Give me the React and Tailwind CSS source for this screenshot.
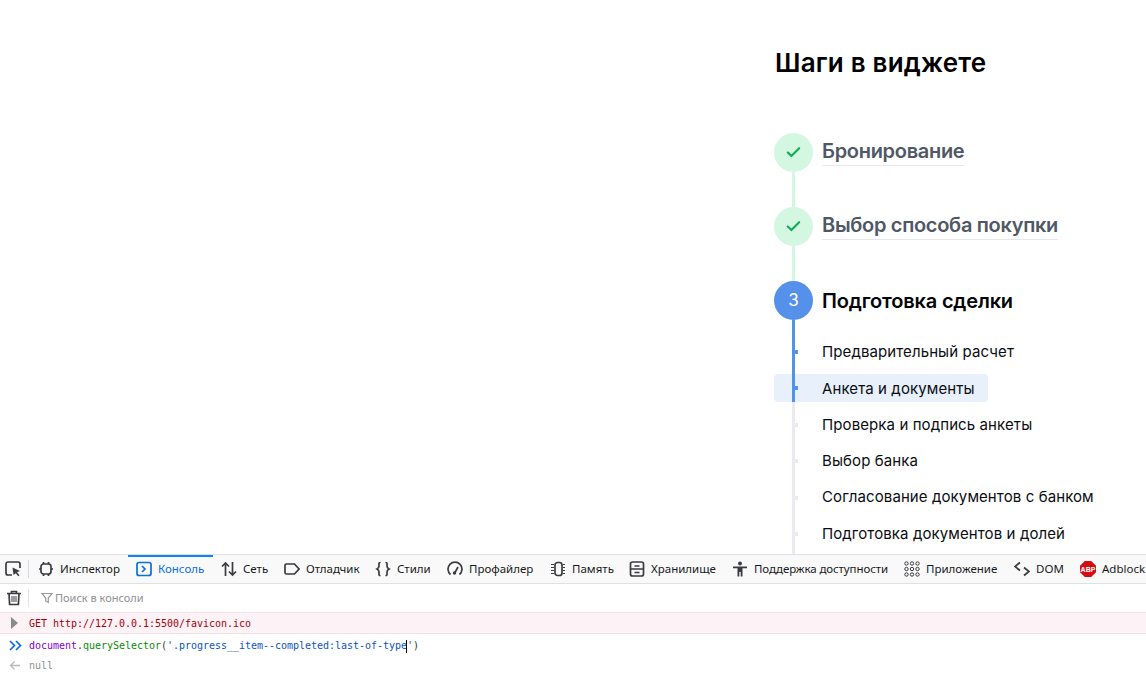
import { Check } from 'lucide-react';

const substeps = [
  { label: 'Предварительный расчет', done: true },
  { label: 'Анкета и документы', done: true, current: true },
  { label: 'Проверка и подпись анкеты' },
  { label: 'Выбор банка' },
  { label: 'Согласование документов с банком' },
  { label: 'Подготовка документов и долей' },
];

const IconBase = ({ children, className = 'text-[#3b3b40]' }) => (
  <svg width="16" height="16" viewBox="0 0 16 16" fill="none" stroke="currentColor" strokeWidth="1.7" className={`shrink-0 ${className}`}>
    {children}
  </svg>
);

const tabs = [
  {
    label: 'Инспектор', width: 'w-[60px]',
    icon: <IconBase><rect x="3" y="3" width="10" height="10" rx="2.5" /><path d="M5.5 1v2M10.5 1v2M5.5 13v2M10.5 13v2M1 8h2M13 8h2" /></IconBase>,
  },
  {
    label: 'Консоль', width: 'w-[47px]', active: true,
    icon: <IconBase className="text-[#0a6fe0]"><rect x="1" y="1.500" width="14" height="13" rx="2" /><path d="M6 5 9 8l-3 3" /></IconBase>,
  },
  {
    label: 'Сеть', width: 'w-[25px]',
    icon: <IconBase><path d="M4.500 15V2M1 5.500 4.500 2 8 5.500M11.500 1v13M8 10.500l3.500 3.500 3.500-3.500" /></IconBase>,
  },
  {
    label: 'Отладчик', width: 'w-[53px]',
    icon: <IconBase><path d="M2.500 3h8L15 8l-4.500 5h-8A1.500 1.500 0 0 1 1 11.500v-7A1.500 1.500 0 0 1 2.500 3Z" /></IconBase>,
  },
  {
    label: 'Стили', width: 'w-[34px]',
    icon: <IconBase><path d="M5.500 1.500C3.500 1.500 4 3 4 5c0 2-2 3-2 3s2 1 2 3c0 2-.5 3.500 1.500 3.500M10.500 1.500c2 0 1.500 1.500 1.500 3.500 0 2 2 3 2 3s-2 1-2 3c0 2 .5 3.500-1.500 3.500" /></IconBase>,
  },
  {
    label: 'Профайлер', width: 'w-[65px]',
    icon: <IconBase><path d="M3.500 13.500a7 7 0 1 1 9 0" /><circle cx="7.500" cy="12" r="1.700" fill="currentColor" stroke="none" /><path d="M8 11.500 11 6" /></IconBase>,
  },
  {
    label: 'Память', width: 'w-[41px]',
    icon: <IconBase><rect x="5" y="1.500" width="7" height="13" rx="2.500" /><path d="M1 3.500h3M1 6.500h3M1 9.500h3M1 12.500h3M13 3.500h2M13 6.500h2M13 9.500h2M13 12.500h2" strokeWidth="1" /></IconBase>,
  },
  {
    label: 'Хранилище', width: 'w-[65px]',
    icon: <IconBase><rect x="1.500" y="1" width="13" height="14" rx="2" /><path d="M5.500 5h5M1.500 8h13M5.500 11.500h5" /></IconBase>,
  },
  {
    label: 'Поддержка доступности', width: 'w-[134px] tracking-[-0.1px]',
    icon: (
      <svg width="16" height="16" viewBox="0 0 16 16" className="shrink-0 text-[#3b3b40]" fill="currentColor">
        <circle cx="8" cy="2.500" r="2" />
        <path d="M1 5.500h14v1.800H10.500V15.500H8.700V11H7.300v4.500H5.500V7.300H1Z" />
      </svg>
    ),
  },
  {
    label: 'Приложение', width: 'w-[72px]',
    icon: (
      <svg width="16" height="16" viewBox="0 0 16 16" className="shrink-0 text-[#3b3b40]" fill="none" stroke="currentColor" strokeWidth="1">
        {[2.500, 8, 13.500].flatMap((x) => [2.500, 8, 13.500].map((y) => <circle key={`${x}-${y}`} cx={x} cy={y} r="1.700" />))}
      </svg>
    ),
  },
  {
    label: 'DOM', width: 'w-[28px]',
    icon: <IconBase><path d="M6 1.500 1 5.500l5 4M10 6.500l5 4-5 4" strokeWidth="1.800" /></IconBase>,
  },
  {
    label: 'Adblock', width: 'w-[44px]',
    icon: (
      <svg width="16" height="16" viewBox="0 0 16 16" className="shrink-0">
        <path d="M4.800 0h6.400L16 4.800v6.400L11.200 16H4.800L0 11.200V4.800Z" fill="#d40d12" />
        <text x="8" y="10.800" textAnchor="middle" fontSize="7" fontWeight="700" fontFamily="Liberation Sans, sans-serif" fill="#fff">ABP</text>
      </svg>
    ),
  },
];

function Step({ status, number, label }) {
  const done = status === 'done';
  return (
    <div className="flex gap-[9px]">
      <div className={`w-[39px] flex flex-col items-center ${number ? '' : 'h-[74px]'}`}>
        <div className={`w-[39px] h-[39px] rounded-full flex items-center justify-center shrink-0 ${done ? 'bg-[#d4f7e2]' : 'bg-[#5591ea]'}`}>
          {done ? <Check size={17} strokeWidth={3} className="text-[#0fae55]" /> : <span className="text-white text-[17px] leading-none">{number}</span>}
        </div>
        {done && <div className="w-[3px] flex-1 bg-[#d4f7e2]" />}
      </div>
      <div className="h-[39px] flex items-center">
        <span className={`text-[20px] font-semibold leading-[26px] ${done ? 'tracking-[-0.3px] text-[#4f5864] border-b border-[#e5e7eb] pb-[1px] -mt-px' : 'tracking-[-0.18px] text-[#040507]'}`}>{label}</span>
      </div>
    </div>
  );
}

function Substep({ label, done, current, first }) {
  return (
    <div className={`relative ${first ? 'pt-[18px]' : 'pt-[8.4px]'}`}>
      <div className={`absolute left-[18px] top-0 bottom-0 w-[3px] z-10 ${done ? 'bg-[#5591ea]' : 'bg-[#e9ebf0]'}`} />
      <div className={`h-[28px] flex items-center pl-[48px] w-fit pr-[13px] rounded-[4px] relative ${current ? 'bg-[#e8f0fb]' : ''}`}>
        <div className={`absolute left-[21px] top-[12px] w-[3px] h-[4px] ${done ? 'bg-[#5591ea]' : 'bg-[#e9ebf0]'}`} />
        <span className={`text-[15px] tracking-[0.1px] text-[#0b0d12] whitespace-nowrap ${current ? 'mt-[1px]' : ''}`}>{label}</span>
      </div>
    </div>
  );
}

export default function App() {
  return (
    <div className="w-[1146px] h-[696px] overflow-hidden bg-white flex flex-col">
      <div className="h-[554px] overflow-hidden pl-[774px] font-['Inter',sans-serif] shrink-0">
        <h1 className="text-[26px] font-semibold tracking-[0.2px] leading-[32px] text-black pt-[47px] mb-[54px] pl-px">Шаги в виджете</h1>
        <Step status="done" label="Бронирование" />
        <Step status="done" label="Выбор способа покупки" />
        <Step status="current" number="3" label="Подготовка сделки" />
        {substeps.map((s, i) => (
          <Substep key={s.label} {...s} first={i === 0} />
        ))}
        <div className="h-10 w-[3px] ml-[18px] bg-[#e9ebf0]" />
      </div>

      {/* devtools */}
      <div className="flex-1 font-['Noto_Sans',sans-serif] text-[11.5px] border-t border-[#e0e0e2]">
        <div className="h-[29px] bg-[#f9f9fa] border-b border-[#e0e0e2] flex items-stretch overflow-hidden">
          <div className="w-[29px] shrink-0 flex items-center pl-[5px] relative">
            <svg width="16" height="16" viewBox="0 0 16 16" fill="none" className="text-[#3b3b40]">
              <path d="M7 14H3a2 2 0 0 1-2-2V3a2 2 0 0 1 2-2h10a2 2 0 0 1 2 2v4" stroke="currentColor" strokeWidth="1.700" />
              <path d="M7.500 6.500 15 10l-3 1.200 2.500 3-1.300 1-2.400-3L8.500 14Z" fill="currentColor" />
            </svg>
            <div className="absolute right-0 top-[5px] bottom-[5px] w-px bg-[#d7d7db]" />
          </div>
          <div className="w-px shrink-0" />
          {tabs.map((t) => (
            <div
              key={t.label}
              className={`relative flex items-center gap-[6px] px-2 shrink-0 ${t.active ? 'text-[#0a6fe0]' : 'text-[#18191a]'}`}
            >
              {t.active && <div className="absolute left-0 right-0 top-0 h-[2px] bg-[#0a84ff]" />}
              {t.icon}
              <span className={`${t.width} whitespace-nowrap`}>{t.label}</span>
            </div>
          ))}
        </div>

        <div className="h-[28px] bg-white flex items-center">
          <div className="w-[29px] h-full flex items-center pl-[6px] relative">
            <svg width="16" height="16" viewBox="0 0 16 16" fill="none" stroke="#3b3b40" strokeWidth="1.700">
              <path d="M1 3.500h14M5.500 3V1.500h5V3M3 3.500l.6 11h8.800l.6-11" />
              <path d="M6 6v6M8 6v6M10 6v6" strokeWidth="1" />
            </svg>
            <div className="absolute right-0 top-[5px] bottom-[5px] w-px bg-[#e0e0e2]" />
          </div>
          <svg width="12" height="12" viewBox="0 0 12 12" fill="none" stroke="#9a9a9e" strokeWidth="1.200" className="ml-[12px]">
            <path d="M1 1.500h10L7.300 6v4.500L4.700 9V6Z" />
          </svg>
          <span className="ml-[2px] text-[11px] text-[#8f8f94]">Поиск в консоли</span>
        </div>

        <div className="font-['DejaVu_Sans_Mono',monospace] text-[10px] tracking-[-0.02px]">
          <div className="h-[22px] bg-[#fdf2f5] border-y border-[#f0e1e5] flex items-center pl-[11px]">
            <span className="w-0 h-0 border-y-[6px] border-y-transparent border-l-[7px] border-l-[#8a8a8e]" />
            <span className="ml-[11px] text-[#a4000f] whitespace-pre">GET http://127.0.0.1:5500/favicon.ico</span>
          </div>
          <div className="h-[25px] flex items-center pl-[9px] pb-[2px]">
            <svg width="13" height="11" viewBox="0 0 13 11" fill="none" stroke="#0a6fe0" strokeWidth="1.700">
              <path d="M1 1l4.500 4.500L1 10M7 1l4.500 4.500L7 10" />
            </svg>
            <span className="ml-[7px] whitespace-pre relative">
              <span className="text-[#8000d7]">document</span>
              <span className="text-[#38383d]">.</span>
              <span className="text-[#058b00]">querySelector</span>
              <span className="text-[#38383d]">(</span>
              <span className="text-[#0a54c2]">'.progress__item--completed:last-of-type</span>
              <span className="inline-block w-px h-[13px] -ml-px bg-black align-middle" />
              <span className="text-[#0a54c2]">'</span>
              <span className="text-[#38383d]">)</span>
            </span>
          </div>
          <div className="h-[15px] flex items-center pl-[9px] -mt-px">
            <svg width="12" height="11" viewBox="0 0 12 11" fill="none" stroke="#b8b8bc" strokeWidth="1.300">
              <path d="M11 5.500H1.500M5.500 1.500l-4 4 4 4" />
            </svg>
            <span className="ml-[8px] text-[#8f8f94]">null</span>
          </div>
        </div>
      </div>
    </div>
  );
}
